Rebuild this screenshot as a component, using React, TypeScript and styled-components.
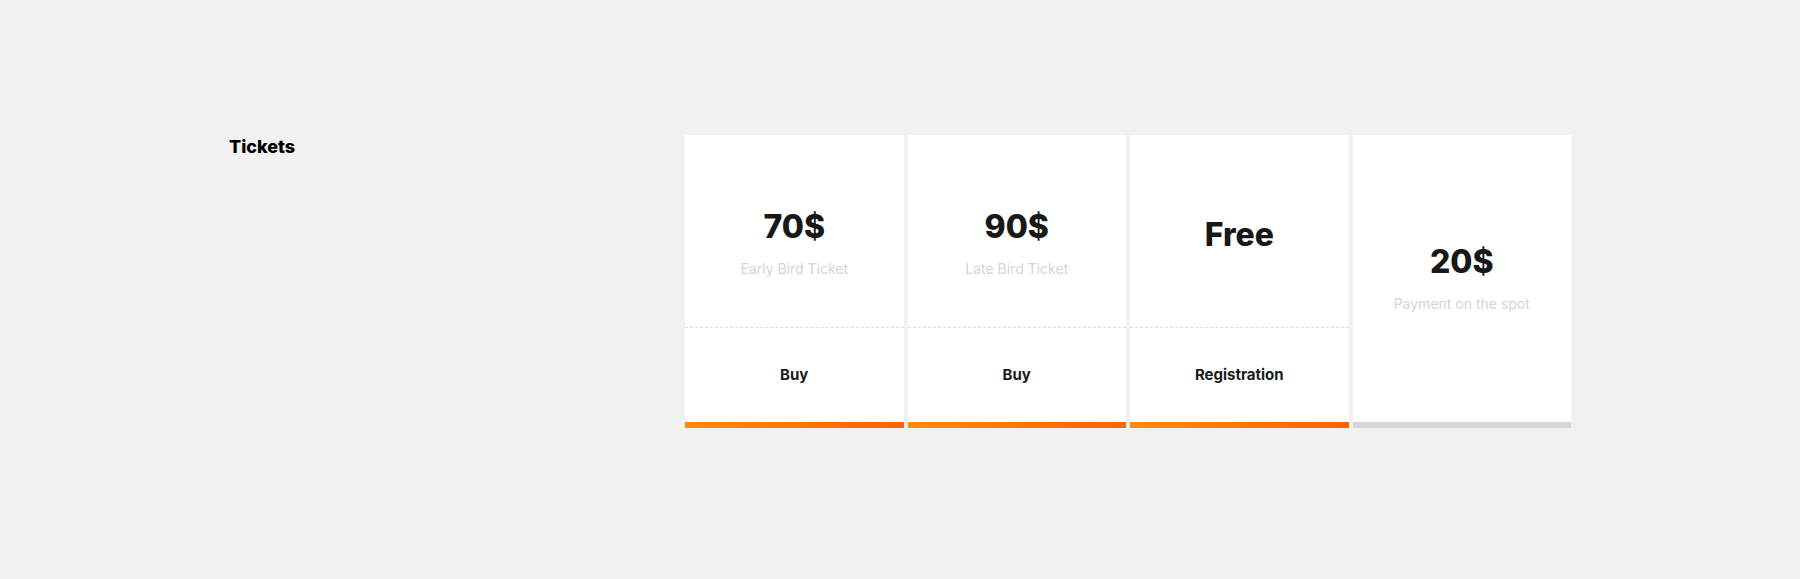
import React from "react";
import styled, { createGlobalStyle } from "styled-components";

const GlobalStyle = createGlobalStyle`
  html, body {
    margin: 0;
    padding: 0;
    background: #f1f1f1;
    font-family: Inter, "Noto Sans", "Liberation Sans", sans-serif;
  }
`;

type Ticket = {
  price: string;
  label: string;
  action?: string;
};

const tickets: Ticket[] = [
  { price: "70$", label: "Early Bird Ticket", action: "Buy" },
  { price: "90$", label: "Late Bird Ticket", action: "Buy" },
  { price: "Free", label: "", action: "Registration" },
  { price: "20$", label: "Payment on the spot" },
];

function TicketCard({ price, label, action }: Ticket) {
  const hasAction = Boolean(action);
  return (
    <Card>
      <Top $full={!hasAction}>
        <Price>{price}</Price>
        <Label>{label}</Label>
      </Top>
      {hasAction && (
        <Bottom>
          <Action>{action}</Action>
        </Bottom>
      )}
      <Bar $active={hasAction} />
    </Card>
  );
}

export default function App() {
  return (
    <>
      <GlobalStyle />
      <Page>
        <Section>
          <Title>Tickets</Title>
          <Grid>
            {tickets.map((t) => (
              <TicketCard key={t.price} {...t} />
            ))}
          </Grid>
        </Section>
      </Page>
    </>
  );
}

const Page = styled.div`
  width: 1800px;
  height: 579px;
  box-sizing: border-box;
  padding: 135px 229px 0;
`;

const Section = styled.section`
  display: flex;
  align-items: flex-start;
`;

const Title = styled.h2`
  width: 456px;
  flex: none;
  margin: 1px 0 0;
  font-size: 18px;
  line-height: 22px;
  font-weight: 800;
  color: #000;
`;

const Grid = styled.div`
  width: 887px;
  display: grid;
  grid-template-columns: repeat(4, 1fr);
  column-gap: 4px;
`;

const Card = styled.div`
  height: 293px;
  display: flex;
  flex-direction: column;
  background: #fff;
`;

const Top = styled.div<{ $full: boolean }>`
  display: flex;
  flex-direction: column;
  align-items: center;
  justify-content: center;
  box-sizing: border-box;
  height: ${(p) => (p.$full ? "287px" : "193px")};
  padding-top: ${(p) => (p.$full ? "0" : "24px")};
  border-bottom: ${(p) => (p.$full ? "none" : "1px dashed #dcdcdc")};
`;

const Price = styled.div`
  font-size: 32px;
  line-height: 38px;
  font-weight: 800;
  color: #181818;
`;

const Label = styled.div`
  margin-top: 13px;
  min-height: 4px;
  font-size: 14px;
  line-height: 20px;
  color: #d4d4d4;
`;

const Bottom = styled.div`
  flex: 1;
  display: flex;
  align-items: center;
  justify-content: center;
`;

const Action = styled.div`
  font-size: 15px;
  line-height: 20px;
  font-weight: 700;
  color: #1a1a1a;
`;

const Bar = styled.div<{ $active: boolean }>`
  height: 6px;
  flex: none;
  background: ${(p) =>
    p.$active ? "linear-gradient(90deg, #ff8a08, #ff6300)" : "#d6d6d6"};
`;
